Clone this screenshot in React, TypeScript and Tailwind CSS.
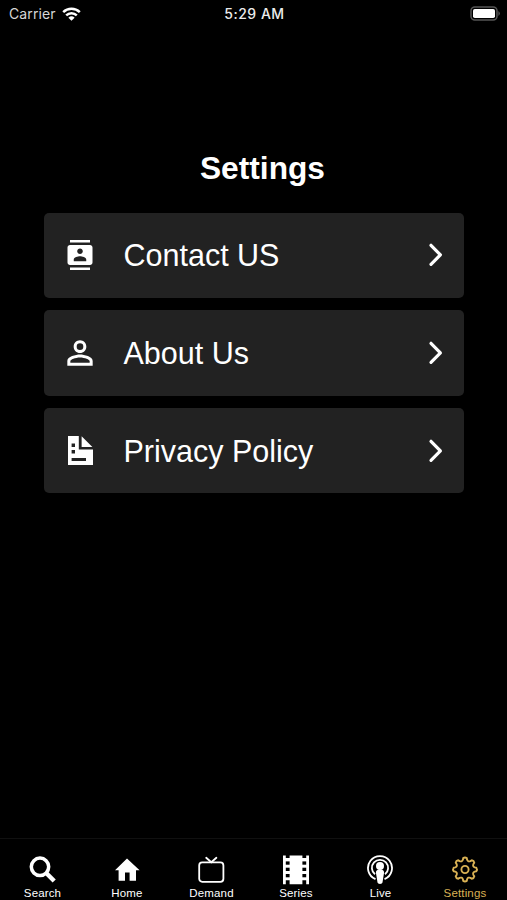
import type { ReactNode } from "react";
import { MdPersonOutline } from "react-icons/md";

function ContactsIcon() {
  return (
    <svg width="30" height="30" viewBox="0 0 24 24" fill="currentColor">
      <path d="M20 0H4v2h16V0zM4 24h16v-2H4v2zM20 4H4c-1.1 0-2 .9-2 2v12c0 1.1.9 2 2 2h16c1.1 0 2-.9 2-2V6c0-1.1-.9-2-2-2zm-8 2.75c1.24 0 2.25 1.01 2.25 2.25s-1.01 2.25-2.25 2.25S9.75 10.24 9.75 9 10.76 6.75 12 6.75zM17 17H7v-1.5c0-1.67 3.33-2.5 5-2.5s5 .83 5 2.5V17z" />
    </svg>
  );
}

function DocumentIcon() {
  return (
    <svg width="25" height="29" viewBox="0 0 25 29" fill="currentColor">
      <path
        fillRule="evenodd"
        d="M0 0h10.8v13.6H25V29H0ZM3.6 7.6v3.4h3.4V7.6ZM3.6 14v3.4h3.4V14ZM3.6 22v3H18v-3Z"
      />
      <path d="M13.6 0.2 24.4 11H13.6Z" />
    </svg>
  );
}

function Row({ icon, label }: { icon: ReactNode; label: string }) {
  return (
    <div className="flex h-[85.5px] items-center rounded-[5px] bg-[#222222] pr-5">
      <div className="flex w-[73px] shrink-0 justify-center">{icon}</div>
      <span className="flex-1 pt-[0.4px] pl-[7px] text-[30.5px] leading-9">{label}</span>
      <svg width="16" height="26" viewBox="0 0 16 26" fill="none" stroke="currentColor" strokeWidth="3.2" strokeLinecap="round" strokeLinejoin="round">
        <path d="M3 3.3 12.4 12.8 3 22.3" />
      </svg>
    </div>
  );
}

function Tab({ icon, label, active }: { icon: ReactNode; label: string; active?: boolean }) {
  return (
    <div className={`flex flex-1 flex-col items-center ${active ? "text-[#d9b154]" : "text-white"}`}>
      <div className="flex h-[46px] items-end">{icon}</div>
      <span className="pt-[2px] pl-[0.5px] text-[11.5px] leading-[13px] tracking-[0.15px]">{label}</span>
    </div>
  );
}

const polar = (r: number, deg: number) => {
  const a = ((deg - 90) * Math.PI) / 180;
  return `${(14 + r * Math.cos(a)).toFixed(2)} ${(14.5 + r * Math.sin(a)).toFixed(2)}`;
};

// Eight rounded teeth joined by concave valleys.
const gearPath =
  Array.from({ length: 8 }, (_, i) => {
    const c = i * 45;
    return `${i === 0 ? "M" : "L"}${polar(11.5, c - 9)}Q${polar(12.6, c)} ${polar(11.5, c + 9)}L${polar(10, c + 12)}Q${polar(8, c + 22.5)} ${polar(10, c + 33)}`;
  }).join("") + "Z";

const holes = [6, 12.3, 18.6];

export default function App() {
  return (
    <div className="flex h-[900px] w-full flex-col overflow-hidden bg-black font-['Liberation_Sans',sans-serif] text-white">
      <header className="grid h-[27px] shrink-0 grid-cols-3 items-center pr-[7px] pl-[9px] font-['Inter',sans-serif] text-[14px]">
        <div className="flex items-center gap-[6px] text-[#d6d6d6]">
          <span className="leading-5 tracking-[0.1px]">Carrier</span>
          <svg width="19" height="14" viewBox="0 0 19 14" fill="none" stroke="#fff" strokeWidth="2.5">
            <path d="M1.2 5.1a12 12 0 0 1 16.6 0M4.2 8.3a7.6 7.6 0 0 1 10.6 0" />
            <path d="M9.5 13.8 6.4 10.7a4.6 4.6 0 0 1 6.2 0Z" fill="#fff" stroke="none" />
          </svg>
        </div>
        <span className="text-center font-medium leading-5 tracking-[0.5px] text-[#ececec]">5:29 AM</span>
        <svg className="justify-self-end" width="30" height="15" viewBox="0 0 30 15">
          <rect x="1" y="1" width="26" height="13" rx="3.8" fill="none" stroke="#555" strokeWidth="1.5" />
          <rect x="3" y="3" width="22" height="9" rx="1.8" fill="#fff" />
          <path d="M28.4 5q3 2.5 0 5Z" fill="#555" />
        </svg>
      </header>

      <main className="flex flex-1 flex-col px-[43.5px] pt-[121px]">
        <h1 className="mb-[24.5px] pl-[18px] text-center text-[31.7px] font-bold leading-10">Settings</h1>
        <div className="flex flex-col gap-[12.2px]">
          <Row icon={<ContactsIcon />} label="Contact US" />
          <Row icon={<MdPersonOutline size={38} />} label="About Us" />
          <Row icon={<DocumentIcon />} label="Privacy Policy" />
        </div>
      </main>

      <nav className="flex h-[62px] shrink-0 border-t border-[#101010]">
        <Tab
          label="Search"
          icon={
            <svg width="28" height="30" viewBox="0 0 28 30" fill="none" stroke="currentColor">
              <circle cx="12" cy="11.8" r="8.7" strokeWidth="3.5" />
              <path d="m18.2 18 8 8" strokeWidth="4.4" />
            </svg>
          }
        />
        <Tab
          label="Home"
          icon={
            <svg width="26" height="30" viewBox="0 0 26 30" fill="currentColor">
              <path d="M13 3.5 25.6 15.2H22V25.8H15.6V17.5H11V25.8H4.6V15.2H1Z" />
            </svg>
          }
        />
        <Tab
          label="Demand"
          icon={
            <svg width="28" height="30" viewBox="0 0 28 30" fill="none" stroke="currentColor" strokeWidth="1.8" strokeLinecap="round">
              <rect x="2.2" y="7.4" width="24.2" height="19.4" rx="3" />
              <path d="m9.2 2.8 5.1 4.4 5.1-4.4" />
            </svg>
          }
        />
        <Tab
          label="Series"
          icon={
            <svg width="26" height="30" viewBox="0 0 26 30">
              <path d="M0 .5H2.8V3H6.6V.5H19.4V3H23.2V.5H26V29.2H23.2V25.2H19.4V29.2H6.6V25.2H2.8V29.2H0Z" fill="currentColor" />
              {holes.map((y) => (
                <g key={y} fill="#000">
                  <rect x="2.8" y={y + 0.4} width="3.8" height="3.3" />
                  <rect x="19.4" y={y + 0.4} width="3.8" height="3.3" />
                </g>
              ))}
            </svg>
          }
        />
        <Tab
          label="Live"
          icon={
            <svg width="28" height="30" viewBox="0 0 28 30" fill="none" stroke="currentColor" strokeWidth="1.8">
              <path d="M9.5 24.2a12 12 0 1 1 9 0" />
              <path d="M9 19.3a8.1 8.1 0 1 1 10 0" />
              <circle cx="14" cy="11" r="4" fill="currentColor" stroke="none" />
              <path d="M9.9 17.4q0-2.9 4.1-2.9t4.1 2.9L16.5 27.6q-.2 1.4-2.5 1.4T11.5 27.6Z" fill="currentColor" stroke="none" />
            </svg>
          }
        />
        <Tab
          active
          label="Settings"
          icon={
            <svg width="28" height="30" viewBox="0 0 28 30" fill="none" stroke="currentColor" strokeWidth="1.9" strokeLinejoin="round">
              <circle cx="14" cy="14.5" r="3.6" />
              <path d={gearPath} />
            </svg>
          }
        />
      </nav>
    </div>
  );
}
